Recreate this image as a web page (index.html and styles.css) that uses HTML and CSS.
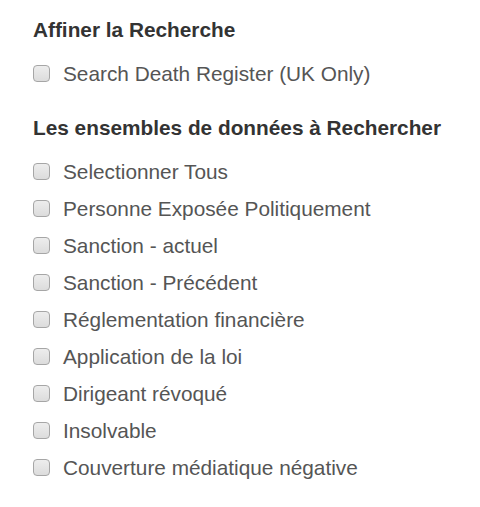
FILE: index.html
```html
<!DOCTYPE html>
<html lang="fr">
<head>
<meta charset="utf-8">
<link rel="stylesheet" href="styles.css">
</head>
<body>
<div class="panel">
  <h4 class="title title-first">Affiner la Recherche</h4>
  <ul class="list">
    <li class="row"><span class="box"></span><span class="label">Search Death Register (UK Only)</span></li>
  </ul>
  <h4 class="title title-second">Les ensembles de données à Rechercher</h4>
  <ul class="list list-data">
    <li class="row"><span class="box"></span><span class="label">Selectionner Tous</span></li>
    <li class="row"><span class="box"></span><span class="label">Personne Exposée Politiquement</span></li>
    <li class="row"><span class="box"></span><span class="label">Sanction - actuel</span></li>
    <li class="row"><span class="box"></span><span class="label">Sanction - Précédent</span></li>
    <li class="row"><span class="box"></span><span class="label">Réglementation financière</span></li>
    <li class="row"><span class="box"></span><span class="label">Application de la loi</span></li>
    <li class="row"><span class="box"></span><span class="label">Dirigeant révoqué</span></li>
    <li class="row"><span class="box"></span><span class="label">Insolvable</span></li>
    <li class="row"><span class="box"></span><span class="label">Couverture médiatique négative</span></li>
  </ul>
</div>
</body>
</html>
```

FILE: styles.css
```css
html, body {
  margin: 0;
  padding: 0;
  background: #ffffff;
}
body {
  font-family: "Liberation Sans", Arial, sans-serif;
  color: #555555;
}
.panel {
  padding: 18px 0 0 33px;
  display: flex;
  flex-direction: column;
}
.title {
  margin: 0;
  font-size: 20.8px;
  line-height: 24px;
  font-weight: bold;
  color: #333333;
}
.title-first {
  margin-bottom: 13px;
}
.title-second {
  margin-top: 24px;
  margin-bottom: 13px;
}
.list {
  list-style: none;
  margin: 0;
  padding: 0;
  display: flex;
  flex-direction: column;
}
.row {
  height: 37px;
  display: flex;
  align-items: center;
  gap: 13px;
}
.box {
  width: 15px;
  height: 15px;
  border: 1px solid #a6a6a6;
  border-radius: 4px;
  background: linear-gradient(#ededed, #dcdcdc);
  flex: none;
}
.label {
  font-size: 20.8px;
  line-height: 24px;
  color: #555555;
}
```
